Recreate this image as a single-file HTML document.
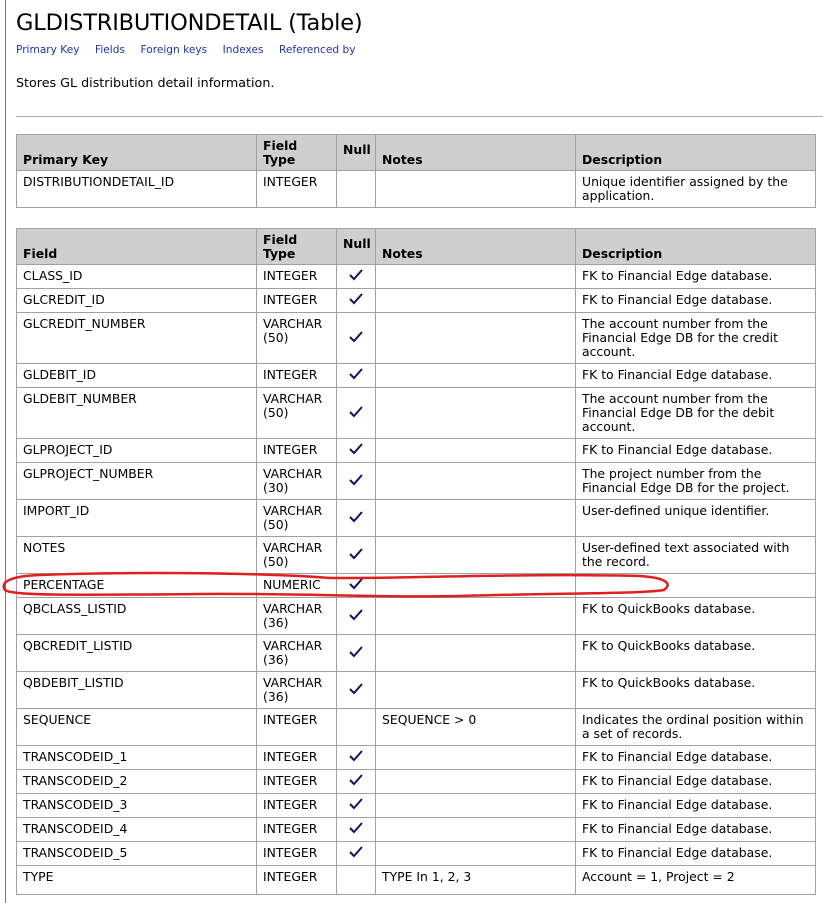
<!DOCTYPE html>
<html><head><meta charset="utf-8"><style>
body{margin:0;width:823px;height:903px;overflow:hidden;background:#fff;font-family:"DejaVu Sans","Liberation Sans",sans-serif;font-size:12px;color:#000;position:relative}
.lb{position:absolute;left:5px;top:0;width:1px;height:903px;background:#777}
h1{position:absolute;left:16px;top:10px;margin:0;font-weight:normal;font-size:22.5px;letter-spacing:-0.2px}
.links{position:absolute;left:16px;top:44px;font-size:10.6px;color:#2233aa}
.links span{margin-right:15.5px}
.desc{position:absolute;left:16px;top:75px;font-size:12.7px}
.hr{position:absolute;left:16px;top:116px;width:807px;height:1px;background:#aaa}
table{position:absolute;left:16px;border-collapse:collapse;width:799px;table-layout:fixed}
td,th{border:1px solid #a0a0a0;padding:4px 6px 0 6px;vertical-align:top;text-align:left;line-height:14px;font-size:12.4px}
th{background:#cfcfcf;vertical-align:bottom;padding-bottom:3px;font-weight:bold}
th.n{vertical-align:top;padding-top:8px}
td.c{text-align:center;vertical-align:middle;padding:0}
</style></head><body>
<div class="lb"></div>
<h1>GLDISTRIBUTIONDETAIL (Table)</h1>
<div class="links"><span>Primary Key</span><span>Fields</span><span>Foreign keys</span><span>Indexes</span><span>Referenced by</span></div>
<div class="desc">Stores GL distribution detail information.</div>
<div class="hr"></div>
<svg width="0" height="0" style="position:absolute"><defs><symbol id="ck" viewBox="0 0 14 12"><path d="M1 6 L5 10 L13 1" fill="none" stroke="#10106a" stroke-width="2"/></symbol></defs></svg>
<table style="top:134px">
<colgroup><col style="width:240px"><col style="width:80px"><col style="width:39px"><col style="width:200px"><col style="width:240px"></colgroup>
<tr style="height:35px"><th>Primary Key</th><th>Field<br>Type</th><th class="n">Null</th><th>Notes</th><th>Description</th></tr>
<tr style="height:37px"><td>DISTRIBUTIONDETAIL_ID</td><td>INTEGER</td><td></td><td></td><td>Unique identifier assigned by the application.</td></tr>
</table>
<table style="top:228px">
<colgroup><col style="width:240px"><col style="width:80px"><col style="width:39px"><col style="width:200px"><col style="width:240px"></colgroup>
<tr style="height:35px"><th>Field</th><th>Field<br>Type</th><th class="n">Null</th><th>Notes</th><th>Description</th></tr>
<tr style="height:24px"><td>CLASS_ID</td><td>INTEGER</td><td class="c"><svg width="14" height="12"><use href="#ck"/></svg></td><td></td><td>FK to Financial Edge database.</td></tr>
<tr style="height:24px"><td>GLCREDIT_ID</td><td>INTEGER</td><td class="c"><svg width="14" height="12"><use href="#ck"/></svg></td><td></td><td>FK to Financial Edge database.</td></tr>
<tr style="height:51px"><td>GLCREDIT_NUMBER</td><td>VARCHAR<br>(50)</td><td class="c"><svg width="14" height="12"><use href="#ck"/></svg></td><td></td><td>The account number from the Financial Edge DB for the credit account.</td></tr>
<tr style="height:24px"><td>GLDEBIT_ID</td><td>INTEGER</td><td class="c"><svg width="14" height="12"><use href="#ck"/></svg></td><td></td><td>FK to Financial Edge database.</td></tr>
<tr style="height:51px"><td>GLDEBIT_NUMBER</td><td>VARCHAR<br>(50)</td><td class="c"><svg width="14" height="12"><use href="#ck"/></svg></td><td></td><td>The account number from the Financial Edge DB for the debit account.</td></tr>
<tr style="height:24px"><td>GLPROJECT_ID</td><td>INTEGER</td><td class="c"><svg width="14" height="12"><use href="#ck"/></svg></td><td></td><td>FK to Financial Edge database.</td></tr>
<tr style="height:37px"><td>GLPROJECT_NUMBER</td><td>VARCHAR<br>(30)</td><td class="c"><svg width="14" height="12"><use href="#ck"/></svg></td><td></td><td>The project number from the Financial Edge DB for the project.</td></tr>
<tr style="height:37px"><td>IMPORT_ID</td><td>VARCHAR<br>(50)</td><td class="c"><svg width="14" height="12"><use href="#ck"/></svg></td><td></td><td>User-defined unique identifier.</td></tr>
<tr style="height:37px"><td>NOTES</td><td>VARCHAR<br>(50)</td><td class="c"><svg width="14" height="12"><use href="#ck"/></svg></td><td></td><td>User-defined text associated with<br>the record.</td></tr>
<tr style="height:24px"><td>PERCENTAGE</td><td>NUMERIC</td><td class="c"><svg width="14" height="12"><use href="#ck"/></svg></td><td></td><td></td></tr>
<tr style="height:37px"><td>QBCLASS_LISTID</td><td>VARCHAR<br>(36)</td><td class="c"><svg width="14" height="12"><use href="#ck"/></svg></td><td></td><td>FK to QuickBooks database.</td></tr>
<tr style="height:37px"><td>QBCREDIT_LISTID</td><td>VARCHAR<br>(36)</td><td class="c"><svg width="14" height="12"><use href="#ck"/></svg></td><td></td><td>FK to QuickBooks database.</td></tr>
<tr style="height:37px"><td>QBDEBIT_LISTID</td><td>VARCHAR<br>(36)</td><td class="c"><svg width="14" height="12"><use href="#ck"/></svg></td><td></td><td>FK to QuickBooks database.</td></tr>
<tr style="height:37px"><td>SEQUENCE</td><td>INTEGER</td><td></td><td>SEQUENCE &gt; 0</td><td>Indicates the ordinal position within<br>a set of records.</td></tr>
<tr style="height:24px"><td>TRANSCODEID_1</td><td>INTEGER</td><td class="c"><svg width="14" height="12"><use href="#ck"/></svg></td><td></td><td>FK to Financial Edge database.</td></tr>
<tr style="height:24px"><td>TRANSCODEID_2</td><td>INTEGER</td><td class="c"><svg width="14" height="12"><use href="#ck"/></svg></td><td></td><td>FK to Financial Edge database.</td></tr>
<tr style="height:24px"><td>TRANSCODEID_3</td><td>INTEGER</td><td class="c"><svg width="14" height="12"><use href="#ck"/></svg></td><td></td><td>FK to Financial Edge database.</td></tr>
<tr style="height:24px"><td>TRANSCODEID_4</td><td>INTEGER</td><td class="c"><svg width="14" height="12"><use href="#ck"/></svg></td><td></td><td>FK to Financial Edge database.</td></tr>
<tr style="height:24px"><td>TRANSCODEID_5</td><td>INTEGER</td><td class="c"><svg width="14" height="12"><use href="#ck"/></svg></td><td></td><td>FK to Financial Edge database.</td></tr>
<tr style="height:29px"><td>TYPE</td><td>INTEGER</td><td></td><td>TYPE In 1, 2, 3</td><td>Account = 1, Project = 2</td></tr>
</table>
<svg style="position:absolute;left:0;top:0" width="823" height="903"><path d="M330 578 C250 572 120 572 40 575 C10 576 0 582 5 590 C12 596 80 595 200 594 C300 593 380 598 460 596 C560 593 640 594 664 590 C672 584 668 578 640 576 C560 574 480 576 420 577 C380 578 350 578 330 578 Z" fill="none" stroke="#e02020" stroke-width="2.5"/></svg>
</body></html>
